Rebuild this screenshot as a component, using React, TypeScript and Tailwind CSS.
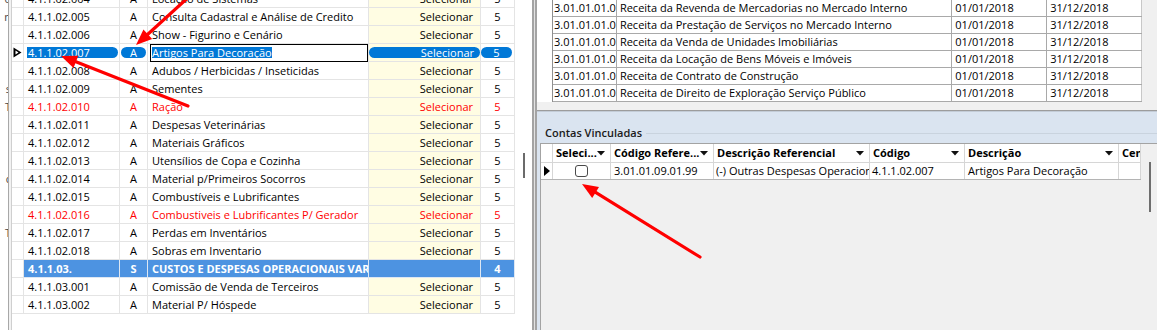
import React from "react"

type Row = {
  code: string
  t: string
  desc: string
  sel: string
  n: string
  red?: boolean
  selected?: boolean
  group?: boolean
}

const rows: Row[] = [
  { code: "4.1.1.02.004", t: "A", desc: "Locação de Sistemas", sel: "Selecionar", n: "5" },
  { code: "4.1.1.02.005", t: "A", desc: "Consulta Cadastral e Análise de Credito", sel: "Selecionar", n: "5" },
  { code: "4.1.1.02.006", t: "A", desc: "Show - Figurino e Cenário", sel: "Selecionar", n: "5" },
  { code: "4.1.1.02.007", t: "A", desc: "Artigos Para Decoração", sel: "Selecionar", n: "5", selected: true },
  { code: "4.1.1.02.008", t: "A", desc: "Adubos / Herbicidas / Inseticidas", sel: "Selecionar", n: "5" },
  { code: "4.1.1.02.009", t: "A", desc: "Sementes", sel: "Selecionar", n: "5" },
  { code: "4.1.1.02.010", t: "A", desc: "Ração", sel: "Selecionar", n: "5", red: true },
  { code: "4.1.1.02.011", t: "A", desc: "Despesas Veterinárias", sel: "Selecionar", n: "5" },
  { code: "4.1.1.02.012", t: "A", desc: "Materiais Gráficos", sel: "Selecionar", n: "5" },
  { code: "4.1.1.02.013", t: "A", desc: "Utensílios de Copa e Cozinha", sel: "Selecionar", n: "5" },
  { code: "4.1.1.02.014", t: "A", desc: "Material p/Primeiros Socorros", sel: "Selecionar", n: "5" },
  { code: "4.1.1.02.015", t: "A", desc: "Combustíveis e Lubrificantes", sel: "Selecionar", n: "5" },
  { code: "4.1.1.02.016", t: "A", desc: "Combustiveis e Lubrificantes P/ Gerador", sel: "Selecionar", n: "5", red: true },
  { code: "4.1.1.02.017", t: "A", desc: "Perdas em Inventários", sel: "Selecionar", n: "5" },
  { code: "4.1.1.02.018", t: "A", desc: "Sobras em Inventario", sel: "Selecionar", n: "5" },
  { code: "4.1.1.03.", t: "S", desc: "CUSTOS E DESPESAS OPERACIONAIS VARIÁVEIS", sel: "", n: "4", group: true },
  { code: "4.1.1.03.001", t: "A", desc: "Comissão de Venda de Terceiros", sel: "Selecionar", n: "5" },
  { code: "4.1.1.03.002", t: "A", desc: "Material P/ Hóspede", sel: "Selecionar", n: "5" },
]

const refRows = [
  ["3.01.01.01.01.01", "Receita da Revenda de Mercadorias no Mercado Interno"],
  ["3.01.01.01.01.02", "Receita da Prestação de Serviços no Mercado Interno"],
  ["3.01.01.01.01.03", "Receita da Venda de Unidades Imobiliárias"],
  ["3.01.01.01.01.04", "Receita da Locação de Bens Móveis e Imóveis"],
  ["3.01.01.01.01.05", "Receita de Contrato de Construção"],
  ["3.01.01.01.01.06", "Receita de Direito de Exploração Serviço Público"],
]

// bits of the panel behind, cut off at the left edge
const fragments = ["o", "n", "", "", "", "s", "T", "", "", "", "c", "", "", "T", "", "", "", ""]

const ln = "border-b border-r border-[#e4e4e4]"

function CurrentRowMark() {
  return (
    <svg width="9" height="11" viewBox="0 0 9 11">
      <polygon points="0.5,0.5 8.5,5.5 0.5,10.5" fill="#000" />
      <polygon points="2.5,3.5 5.5,5.5 2.5,7.5" fill="#fff" />
    </svg>
  )
}

function LeftRow({ r }: { r: Row }) {
  if (r.selected) {
    return (
      <div className="flex h-[18px] text-white">
        <div className={`flex w-[12px] items-center justify-center ${ln}`}>
          <CurrentRowMark />
        </div>
        <div className={`flex w-[96px] items-center pl-[3px] pr-[1px] ${ln}`}>
          <div className="h-[11px] flex-1 overflow-hidden whitespace-nowrap rounded-r-full bg-[#0078d7] pl-[1px] leading-[11px]">
            {r.code}
          </div>
        </div>
        <div className={`flex w-[28px] items-center px-[1px] ${ln}`}>
          <div className="h-[11px] flex-1 rounded-full bg-[#0078d7] text-center leading-[11px]">{r.t}</div>
        </div>
        <div className={`flex w-[221px] items-center pl-[2px] ${ln}`}>
          <div className="flex h-[18px] flex-1 items-center border border-black bg-white pl-[1px]">
            <span className="whitespace-nowrap bg-[#0078d7] leading-[11px]">{r.desc}</span>
          </div>
        </div>
        <div className={`flex w-[112px] items-center bg-[#fffde3] ${ln}`}>
          <div className="h-[11px] flex-1 rounded-full bg-[#0078d7] pr-[6px] text-right leading-[11px]">{r.sel}</div>
        </div>
        <div className={`flex w-[34px] items-center pr-[2px] ${ln}`}>
          <div className="h-[11px] flex-1 rounded-full bg-[#0078d7] text-center leading-[11px]">{r.n}</div>
        </div>
      </div>
    )
  }

  if (r.group) {
    const g = "border-b border-r border-[#dde7f3] bg-[#4d93e1] font-bold leading-[17px] text-white"
    return (
      <div className="flex h-[18px]">
        <div className={`w-[12px] ${ln}`} />
        <div className={`w-[96px] pl-[4px] ${g}`}>{r.code}</div>
        <div className={`w-[28px] text-center ${g}`}>{r.t}</div>
        <div className={`w-[221px] overflow-hidden whitespace-nowrap pl-[4px] ${g}`}>{r.desc}</div>
        <div className={`w-[112px] ${g}`} />
        <div className={`w-[34px] text-center ${g}`}>{r.n}</div>
      </div>
    )
  }

  return (
    <div className={`flex h-[18px] leading-[17px] ${r.red ? "text-[#ff0000]" : "text-black"}`}>
      <div className={`w-[12px] ${ln}`} />
      <div className={`w-[96px] overflow-hidden whitespace-nowrap pl-[4px] ${ln}`}>{r.code}</div>
      <div className={`w-[28px] text-center ${ln}`}>{r.t}</div>
      <div className={`w-[221px] overflow-hidden whitespace-nowrap pl-[4px] ${ln}`}>{r.desc}</div>
      <div className={`w-[112px] bg-[#fffde3] pr-[7px] text-right ${ln}`}>{r.sel}</div>
      <div className={`w-[34px] text-center ${ln}`}>{r.n}</div>
    </div>
  )
}

function LeftGrid() {
  return (
    <div className="flex h-full w-[515px] shrink-0">
      <div className="w-[8px] overflow-hidden">
        <div className="-mt-[10px] flex w-[11px] flex-col text-right text-[#444]">
          {fragments.map((f, i) => (
            <div key={i} className="h-[18px] whitespace-nowrap leading-[17px]">
              {f}
            </div>
          ))}
        </div>
      </div>
      <div className="w-[4px] border-l border-r border-l-[#a8a8a8] border-r-[#cfcfcf] bg-[#f2f2f2]" />
      <div className="flex flex-1 flex-col overflow-hidden">
        <div className="-mt-[10px] flex flex-col">
          {rows.map((r) => (
            <LeftRow key={r.code} r={r} />
          ))}
        </div>
      </div>
    </div>
  )
}

function Splitter() {
  return (
    <>
      <div className="flex w-[17px] shrink-0 items-center justify-center bg-white">
        <div className="h-[25px] w-[2px] bg-[#6b6b6b]" />
      </div>
      <div className="w-[5px] shrink-0 border-l-2 border-r-2 border-[#a3a3a3] bg-[#e2e2e2]" />
    </>
  )
}

function DropArrow() {
  return (
    <svg width="8" height="5" viewBox="0 0 8 5" className="ml-auto mr-[5px] shrink-0">
      <polygon points="0,0 8,0 4,4.5" fill="#111" />
    </svg>
  )
}

const headCols = [
  { w: "w-[58px]", label: "Seleci...", arrow: true },
  { w: "w-[103px]", label: "Código Refere...", arrow: true },
  { w: "w-[156px]", label: "Descrição Referencial", arrow: true },
  { w: "w-[95px]", label: "Código", arrow: true },
  { w: "w-[154px]", label: "Descrição", arrow: true },
  { w: "w-[22px]", label: "Cen", arrow: false },
]

function RightPanel() {
  return (
    <div className="flex min-w-0 flex-1 flex-col">
      {/* referencial table */}
      <div className="flex h-[110px] flex-col bg-[#f0f0f0]">
        <div className="flex h-[102px]">
          <div className="w-[15px] bg-white" />
          <div className="flex w-[590px] flex-col border-l border-[#8f8f8f] bg-white">
            {refRows.map(([c, d]) => (
              <div key={c} className="flex h-[17px] border-b border-[#a9a9a9] leading-[16px]">
                <div className="w-[64px] overflow-hidden whitespace-nowrap border-r border-[#a9a9a9] pl-[1px]">{c}</div>
                <div className="w-[336px] overflow-hidden whitespace-nowrap border-r border-[#a9a9a9] pl-[3px]">{d}</div>
                <div className="w-[95px] border-r border-[#a9a9a9] pl-[3px]">01/01/2018</div>
                <div className="w-[95px] border-r border-[#c8c8c8] pl-[3px]">31/12/2018</div>
              </div>
            ))}
          </div>
          <div className="flex-1" />
        </div>
      </div>

      <div className="h-px bg-[#9c9c9c]" />
      <div className="h-px bg-[#c3ccd7]" />

      {/* contas vinculadas */}
      <div className="flex flex-1 flex-col bg-[#dae4f0] pl-[3px]">
        <div className="flex h-[31px] items-center pt-[12px]">
          <span className="whitespace-nowrap pl-[5px] font-semibold text-[#1b1b1b]">Contas Vinculadas</span>
          <div className="ml-[4px] h-px flex-1 bg-[#c9d3de]" />
        </div>
        <div className="flex flex-1 border-l border-t border-[#a3a3a3] bg-[#f0f0f0]">
          <div className="flex w-[600px] flex-col">
            <div className="flex h-[19px] border-b border-[#d6d6d6] bg-white font-bold">
              <div className="w-[12px] border-r border-[#d6d6d6]" />
              {headCols.map((h) => (
                <div
                  key={h.label}
                  className={`flex ${h.w} items-center overflow-hidden whitespace-nowrap border-r border-[#d6d6d6] pl-[3px]`}
                >
                  <span>{h.label}</span>
                  {h.arrow && <DropArrow />}
                </div>
              ))}
            </div>
            <div className="flex h-[17px] border-b border-[#b4b4b4] bg-white leading-[16px]">
              <div className="flex w-[12px] items-center justify-center border-r border-[#d6d6d6]">
                <svg width="6" height="10" viewBox="0 0 6 10">
                  <polygon points="0,0 6,5 0,10" fill="#000" />
                </svg>
              </div>
              <div className="flex w-[58px] items-center justify-center border-r border-[#d6d6d6]">
                <div className="h-[12px] w-[13px] rounded-[3px] border border-[#4a4a4a] bg-white" />
              </div>
              <div className="w-[103px] overflow-hidden whitespace-nowrap border-r border-[#d6d6d6] pl-[3px]">3.01.01.09.01.99</div>
              <div className="w-[156px] overflow-hidden whitespace-nowrap border-r border-[#d6d6d6] pl-[2px]">(-) Outras Despesas Operacionais</div>
              <div className="w-[95px] overflow-hidden whitespace-nowrap border-r border-[#d6d6d6] pl-[2px]">4.1.1.02.007</div>
              <div className="w-[154px] overflow-hidden whitespace-nowrap border-r border-[#d6d6d6] pl-[3px]">Artigos Para Decoração</div>
              <div className="w-[22px] border-r border-[#d6d6d6]" />
            </div>
          </div>
          <div className="flex flex-1 flex-col pt-[18px]">
            <div className="ml-[8px] h-[50px] w-[2px] bg-[#6e6e6e]" />
          </div>
        </div>
      </div>
    </div>
  )
}

function Arrow({ x1, y1, x2, y2 }: { x1: number; y1: number; x2: number; y2: number }) {
  // (x1,y1) tail, (x2,y2) tip
  const dx = x1 - x2
  const dy = y1 - y2
  const len = Math.hypot(dx, dy)
  const ux = dx / len
  const uy = dy / len
  const L = 16
  const W = 6.5
  const bx = x2 + ux * L
  const by = y2 + uy * L
  const px = -uy
  const py = ux
  const pts = `${x2},${y2} ${bx + px * W},${by + py * W} ${bx - px * W},${by - py * W}`
  return (
    <g>
      <line x1={x1} y1={y1} x2={bx} y2={by} stroke="#ff0000" strokeWidth={3.2} strokeLinecap="round" />
      <polygon points={pts} fill="#ff0000" />
    </g>
  )
}

function Arrows() {
  return (
    <svg
      className="pointer-events-none absolute left-0 top-0"
      width="1157"
      height="330"
      viewBox="0 0 1157 330"
    >
      <Arrow x1={188} y1={106} x2={61} y2={56} />
      <Arrow x1={192} y1={-6} x2={136} y2={45} />
      <Arrow x1={700} y1={257} x2={582} y2={184} />
    </svg>
  )
}

export default function App() {
  return (
    <div className="relative flex h-[330px] w-[1157px] overflow-hidden bg-white font-['Open_Sans',sans-serif] text-[11px] text-black">
      <LeftGrid />
      <Splitter />
      <RightPanel />
      <Arrows />
    </div>
  )
}
